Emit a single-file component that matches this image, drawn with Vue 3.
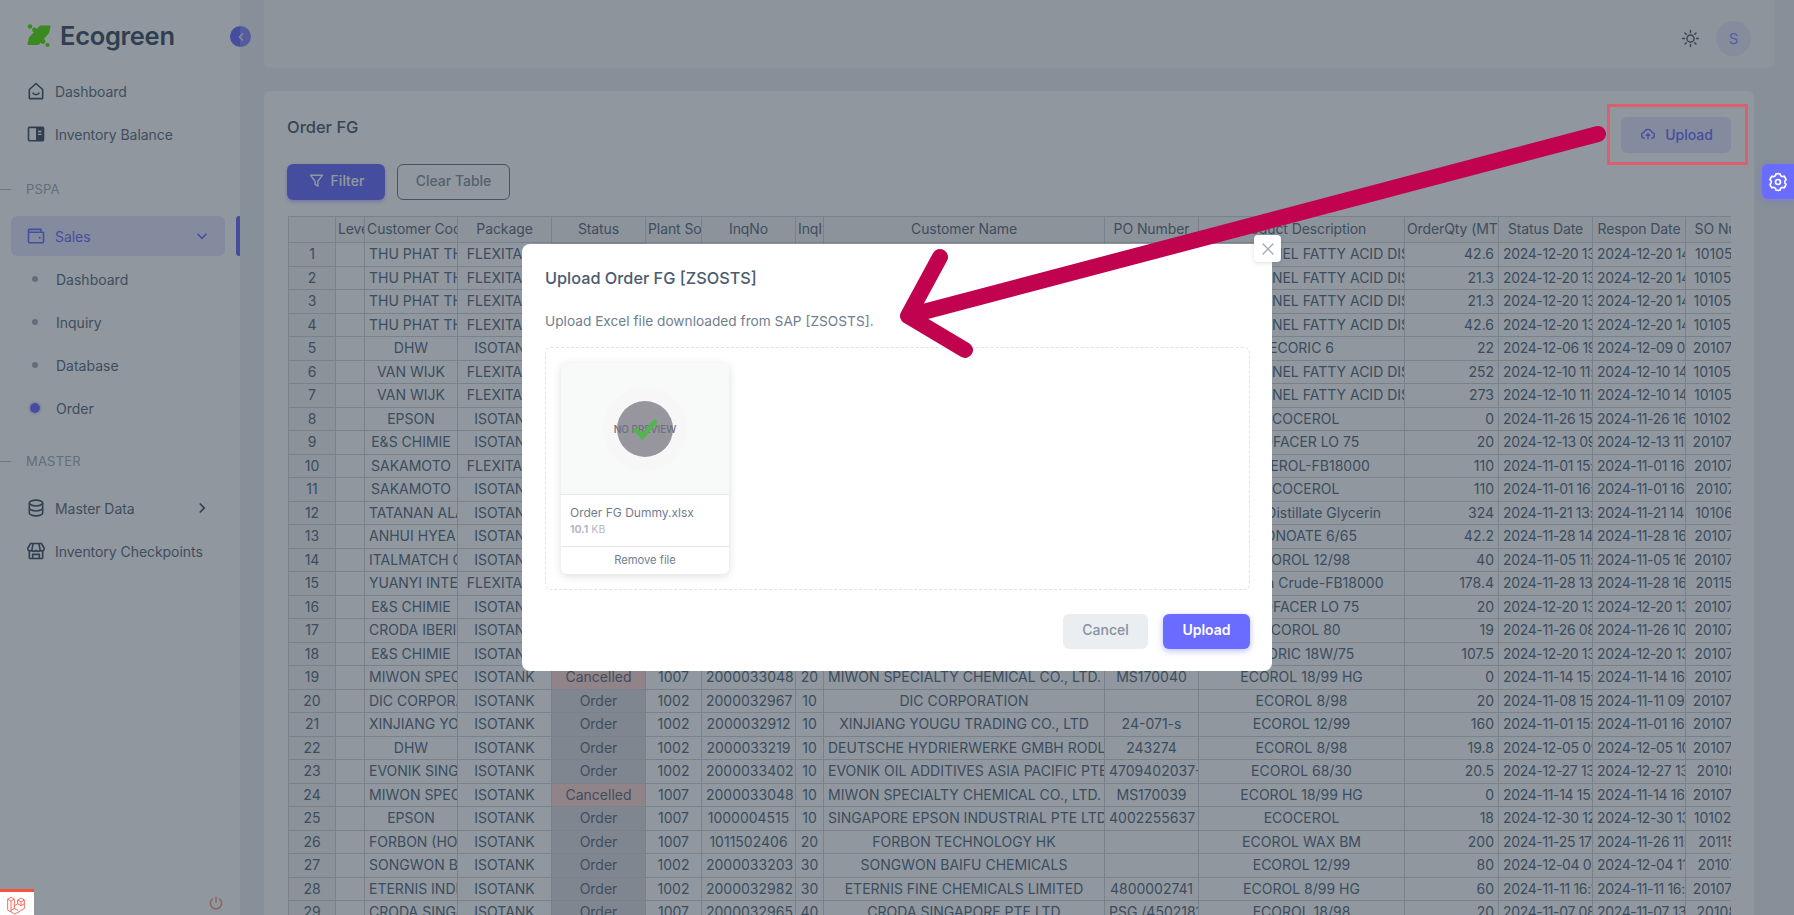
<script setup>
const colWidths = [47, 29, 93, 94, 94, 56, 94, 28, 281, 94, 206, 94, 94, 93, 94]

const headers = ['', 'Level', 'Customer Code', 'Package', 'Status', 'Plant Source', 'InqNo', 'InqItem', 'Customer Name', 'PO Number', 'Product Description', 'OrderQty (MT)', 'Status Date', 'Respon Date', 'SO Number']

const FX = 'FLEXITANK'
const IS = 'ISOTANK'
const PK = 'PALM KERNEL FATTY ACID DISTILLATE'

// customer, package, status, plant, inq, item, name, po, product, qty, status date, respon date, so
const rows = [
  ['THU PHAT THANH', FX, 'Order', '1002', '2000033501', '10', 'THU PHAT THANH', '', PK, '42.6', '2024-12-20 13:10:22', '2024-12-20 14:02:11', '1010512201'],
  ['THU PHAT THANH', FX, 'Order', '1002', '2000033502', '10', 'THU PHAT THANH', '', PK, '21.3', '2024-12-20 13:10:22', '2024-12-20 14:02:11', '1010512202'],
  ['THU PHAT THANH', FX, 'Order', '1002', '2000033503', '10', 'THU PHAT THANH', '', PK, '21.3', '2024-12-20 13:10:22', '2024-12-20 14:02:11', '1010512203'],
  ['THU PHAT THANH', FX, 'Order', '1002', '2000033504', '10', 'THU PHAT THANH', '', PK, '42.6', '2024-12-20 13:10:22', '2024-12-20 14:02:11', '1010512204'],
  ['DHW', IS, 'Order', '1002', '2000033210', '10', 'DEUTSCHE HYDRIERWERKE', '', 'ECORIC 6', '22', '2024-12-06 19:10:22', '2024-12-09 08:02:11', '2010712205'],
  ['VAN WIJK', FX, 'Order', '1002', '2000033301', '10', 'VAN WIJK', '', PK, '252', '2024-12-10 11:10:22', '2024-12-10 14:02:11', '1010512206'],
  ['VAN WIJK', FX, 'Order', '1002', '2000033302', '10', 'VAN WIJK', '', PK, '273', '2024-12-10 11:10:22', '2024-12-10 14:02:11', '1010512207'],
  ['EPSON', IS, 'Order', '1007', '1000004510', '10', 'SINGAPORE EPSON', '', 'ECOCEROL', '0', '2024-11-26 15:10:22', '2024-11-26 16:02:11', '1010212208'],
  ['E&S CHIMIE', IS, 'Order', '1002', '2000033110', '10', 'E&S CHIMIE', '', 'ECOFACER LO 75', '20', '2024-12-13 09:10:22', '2024-12-13 11:02:11', '2010712209'],
  ['SAKAMOTO', FX, 'Order', '1007', '2000032901', '10', 'SAKAMOTO', '', 'GLYCEROL-FB18000', '110', '2024-11-01 15:10:22', '2024-11-01 16:02:11', '2010712210'],
  ['SAKAMOTO', IS, 'Order', '1007', '2000032902', '10', 'SAKAMOTO', '', 'ECOCEROL', '110', '2024-11-01 16:10:22', '2024-11-01 16:32:11', '2010712211'],
  ['TATANAN ALAM', IS, 'Order', '1002', '2000032950', '10', 'TATANAN ALAM', '', 'Crude Distillate Glycerin', '324', '2024-11-21 13:10:22', '2024-11-21 14:02:11', '1010612212'],
  ['ANHUI HYEA', IS, 'Order', '1002', '2000033001', '10', 'ANHUI HYEA', '', 'ECONOATE 6/65', '42.2', '2024-11-28 14:10:22', '2024-11-28 16:02:11', '2010712213'],
  ['ITALMATCH CHEMICALS', IS, 'Order', '1002', '2000032930', '10', 'ITALMATCH', '', 'ECOROL 12/98', '40', '2024-11-05 11:10:22', '2024-11-05 16:02:11', '2010712214'],
  ['YUANYI INTERNATIONAL', FX, 'Order', '1002', '2000033005', '10', 'YUANYI', '', 'Glycerin Crude-FB18000', '178.4', '2024-11-28 13:10:22', '2024-11-28 16:02:11', '2011512215'],
  ['E&S CHIMIE', IS, 'Order', '1002', '2000033112', '10', 'E&S CHIMIE', '', 'ECOFACER LO 75', '20', '2024-12-20 13:10:22', '2024-12-20 13:32:11', '2010712216'],
  ['CRODA IBERICA', IS, 'Order', '1007', '2000032990', '10', 'CRODA IBERICA', '', 'ECOROL 80', '19', '2024-11-26 08:10:22', '2024-11-26 10:02:11', '2010712217'],
  ['E&S CHIMIE', IS, 'Order', '1002', '2000033114', '10', 'E&S CHIMIE', '', 'ECORIC 18W/75', '107.5', '2024-12-20 13:10:22', '2024-12-20 13:32:11', '2010712218'],
  ['MIWON SPECIALTY', IS, 'Cancelled', '1007', '2000033048', '20', 'MIWON SPECIALTY CHEMICAL CO., LTD.', 'MS170040', 'ECOROL 18/99 HG', '0', '2024-11-14 15:10:22', '2024-11-14 16:02:11', '2010712219'],
  ['DIC CORPORATION', IS, 'Order', '1002', '2000032967', '10', 'DIC CORPORATION', '', 'ECOROL 8/98', '20', '2024-11-08 15:10:22', '2024-11-11 09:02:11', '2010712220'],
  ['XINJIANG YOUGU', IS, 'Order', '1002', '2000032912', '10', 'XINJIANG YOUGU TRADING CO., LTD', '24-071-s', 'ECOROL 12/99', '160', '2024-11-01 15:10:22', '2024-11-01 16:02:11', '2010732221'],
  ['DHW', IS, 'Order', '1002', '2000033219', '10', 'DEUTSCHE HYDRIERWERKE GMBH RODLEBEN', '243274', 'ECOROL 8/98', '19.8', '2024-12-05 09:10:22', '2024-12-05 10:02:11', '2010712222'],
  ['EVONIK SINGAPORE', IS, 'Order', '1002', '2000033402', '10', 'EVONIK OIL ADDITIVES ASIA PACIFIC PTE LTD', '4709402037-1', 'ECOROL 68/30', '20.5', '2024-12-27 13:10:22', '2024-12-27 13:32:11', '201081223'],
  ['MIWON SPECIALTY', IS, 'Cancelled', '1007', '2000033048', '10', 'MIWON SPECIALTY CHEMICAL CO., LTD.', 'MS170039', 'ECOROL 18/99 HG', '0', '2024-11-14 15:10:22', '2024-11-14 16:02:11', '2010712224'],
  ['EPSON', IS, 'Order', '1007', '1000004515', '10', 'SINGAPORE EPSON INDUSTRIAL PTE LTD', '4002255637', 'ECOCEROL', '18', '2024-12-30 12:10:22', '2024-12-30 13:02:11', '1010212225'],
  ['FORBON (HONG KONG)', IS, 'Order', '1007', '1011502406', '20', 'FORBON TECHNOLOGY HK', '', 'ECOROL WAX BM', '200', '2024-11-25 17:10:22', '2024-11-26 11:02:11', '201151226'],
  ['SONGWON BAIFU', IS, 'Order', '1002', '2000033203', '30', 'SONGWON BAIFU CHEMICALS', '', 'ECOROL 12/99', '80', '2024-12-04 09:10:22', '2024-12-04 11:02:11', '201071227'],
  ['ETERNIS INDIA', IS, 'Order', '1002', '2000032982', '30', 'ETERNIS FINE CHEMICALS LIMITED', '4800002741', 'ECOROL 8/99 HG', '60', '2024-11-11 16:10:22', '2024-11-11 16:32:11', '2010712228'],
  ['CRODA SINGAPORE', IS, 'Order', '1007', '2000032965', '40', 'CRODA SINGAPORE PTE LTD', 'PSG /4502181', 'ECOROL 18/98', '20', '2024-11-07 08:10:22', '2024-11-07 13:02:11', '201081229'],
]
</script>

<template>
  <div class="page">
    <aside class="sidebar">
      <div class="brand">
        <svg class="brand-logo" viewBox="0 0 24 24">
          <path d="M13 1.500h9.500c.8 0 1.200.5 1 1.300l-1.500 6.200-9 10.500-2 1.500H1.500c-.8 0-1.200-.5-1-1.300L2 13.500z" />
          <circle cx="3" cy="2.500" r="2.300" />
          <circle cx="7.500" cy="6" r="2.400" />
          <circle cx="16" cy="17.500" r="2.400" />
          <circle cx="20.500" cy="21" r="2.100" />
        </svg>
        <span class="brand-name">Ecogreen</span>
      </div>
      <button class="collapse">
        <svg viewBox="0 0 24 24" width="12" height="12"><path d="M15 6l-6 6 6 6" fill="none" stroke="#e6e6ff" stroke-width="3.500" stroke-linecap="round" stroke-linejoin="round" /></svg>
      </button>

      <nav class="menu">
        <a class="item">
          <svg class="ico" viewBox="0 0 24 24"><path d="M4 20.500V10.200L12 3l8 7.200v10.300a.6.600 0 0 1-.6.600H4.600a.6.600 0 0 1-.6-.6z" /><path d="M8 14a4.500 4.500 0 0 0 8 0" /></svg>
          <span>Dashboard</span>
        </a>
        <a class="item">
          <svg class="ico" viewBox="0 0 24 24"><rect x="3" y="4" width="18" height="16" rx="1" /><path class="solid" d="M12 4h9v16h-9z" /><path class="cut" d="M14.500 9h4M14.500 12.500h4" /></svg>
          <span>Inventory Balance</span>
        </a>

        <div class="section"><span>PSPA</span></div>

        <a class="item active">
          <svg class="ico" viewBox="0 0 24 24"><path d="M3 7.500V19a1 1 0 0 0 1 1h16a1 1 0 0 0 1-1V8.500a1 1 0 0 0-1-1H3zM3 7.500V5.200A1.200 1.200 0 0 1 4.200 4H18v3.500" /><circle cx="16.500" cy="14" r="1.200" class="dot" /></svg>
          <span>Sales</span>
          <svg class="chev" viewBox="0 0 24 24"><path d="M6 9l6 6 6-6" /></svg>
        </a>
        <a class="sub"><i></i><span>Dashboard</span></a>
        <a class="sub"><i></i><span>Inquiry</span></a>
        <a class="sub"><i></i><span>Database</span></a>
        <a class="sub on"><i></i><span>Order</span></a>

        <div class="section master"><span>MASTER</span></div>

        <a class="item">
          <svg class="ico" viewBox="0 0 24 24"><ellipse cx="12" cy="6" rx="8" ry="3.500" /><path d="M4 6v12c0 1.900 3.600 3.500 8 3.500s8-1.600 8-3.500V6M4 12c0 1.900 3.600 3.500 8 3.500s8-1.600 8-3.500" /></svg>
          <span>Master Data</span>
          <svg class="chev" viewBox="0 0 24 24"><path d="M9 6l6 6-6 6" /></svg>
        </a>
        <a class="item">
          <svg class="ico" viewBox="0 0 24 24"><path d="M4 11.500V20a1 1 0 0 0 1 1h14a1 1 0 0 0 1-1v-8.500" /><path d="M5.500 3h13L22 9a3 3 0 0 1-5 2.200 3.600 3.600 0 0 1-5 0 3.600 3.600 0 0 1-5 0A3 3 0 0 1 2 9z" /><path d="M8.500 3 7 11M15.500 3 17 11M8 21v-5h8v5" /></svg>
          <span>Inventory Checkpoints</span>
        </a>
      </nav>

      <svg class="power" viewBox="0 0 24 24"><path d="M7 5.500a8.500 8.500 0 1 0 10 0M12 2.500v9" /></svg>
    </aside>

    <main class="content">
      <header class="topbar">
        <svg class="sun" viewBox="0 0 24 24"><circle cx="12" cy="12" r="4.500" /><path d="M12 2v2.500M12 19.500V22M2 12h2.500M19.500 12H22M5 5l1.700 1.700M17.300 17.300 19 19M5 19l1.700-1.700M17.300 6.700 19 5" /></svg>
        <div class="avatar">S</div>
      </header>

      <section class="card">
        <div class="card-head">
          <h2>Order FG</h2>
          <button class="btn-tonal">
            <svg viewBox="0 0 24 24"><path d="M7 18.500a4.500 4.500 0 0 1-1-8.900 6.200 6.200 0 0 1 12 0 4.500 4.500 0 0 1-1 8.900" /><path d="M12 20v-8M8.800 14.800 12 11.600l3.200 3.200" /></svg>
            Upload
          </button>
        </div>
        <div class="toolbar">
          <button class="btn-primary">
            <svg viewBox="0 0 24 24"><path d="M3.500 4.500h17L14 13v7l-4-2.500V13z" /></svg>
            Filter
          </button>
          <button class="btn-outline">Clear Table</button>
        </div>

        <div class="grid">
          <table>
            <colgroup>
              <col v-for="(w, i) in colWidths" :key="i" :style="{ width: w + 'px' }" />
            </colgroup>
            <thead>
              <tr>
                <th v-for="h in headers" :key="h">{{ h }}</th>
              </tr>
            </thead>
            <tbody>
              <tr v-for="(r, i) in rows" :key="i">
                <th class="num">{{ i + 1 }}</th>
                <td></td>
                <td>{{ r[0] }}</td>
                <td>{{ r[1] }}</td>
                <td :class="r[2] === 'Cancelled' ? 'st-cancel' : 'st-order'">{{ r[2] }}</td>
                <td>{{ r[3] }}</td>
                <td>{{ r[4] }}</td>
                <td>{{ r[5] }}</td>
                <td>{{ r[6] }}</td>
                <td>{{ r[7] }}</td>
                <td>{{ r[8] }}</td>
                <td class="right">{{ r[9] }}</td>
                <td class="date">{{ r[10] }}</td>
                <td class="date">{{ r[11] }}</td>
                <td>{{ r[12] }}</td>
              </tr>
            </tbody>
          </table>
        </div>
      </section>
    </main>

    <div class="backdrop"></div>

    <div class="modal">
      <button class="modal-close">
        <svg viewBox="0 0 24 24" width="20" height="20"><path d="M5.500 5.500l13 13M18.500 5.500l-13 13" fill="none" stroke="#a8afb7" stroke-width="1.800" /></svg>
      </button>
      <h3>Upload Order FG [ZSOSTS]</h3>
      <p>Upload Excel file downloaded from SAP [ZSOSTS].</p>
      <div class="dropzone">
        <div class="preview">
          <div class="thumb">
            <div class="halo">
              <div class="circle"></div>
              <span class="no-prev">NO PREVIEW</span>
              <svg class="check" viewBox="0 0 24 24"><path d="M3.500 13l6 6L21 5.500" /></svg>
            </div>
          </div>
          <div class="details">
            <div class="fname">Order FG Dummy.xlsx</div>
            <div class="fsize"><b>10.1</b> KB</div>
          </div>
          <div class="remove">Remove file</div>
        </div>
      </div>
      <div class="modal-foot">
        <button class="btn-cancel">Cancel</button>
        <button class="btn-upload">Upload</button>
      </div>
    </div>

    <button class="gear">
      <svg viewBox="0 0 24 24"><path d="M3.340 17a10 10 0 0 1-.98-2.330 3 3 0 0 0 0-5.340 10 10 0 0 1 2.500-4.340 3 3 0 0 0 4.640-2.670 10 10 0 0 1 5 0 3 3 0 0 0 4.640 2.670c.58.590 1.090 1.260 1.520 2.010s.76 1.530.98 2.330a3 3 0 0 0 0 5.340 10 10 0 0 1-2.500 4.340 3 3 0 0 0-4.640 2.670 10 10 0 0 1-5 0 3 3 0 0 0-4.640-2.670A10 10 0 0 1 3.340 17z" /><circle cx="12" cy="12" r="3" /></svg>
    </button>

    <div class="debugbar">
      <svg viewBox="0 0 24 24"><path d="M2 5l4-2.300L10 5 6 7.300zM2 5v13l8.500 4.900 11-6.300M6 7.300v13M10 5v11l-4 2.300M10 16l4.500 2.700M22 6l-4-2.300L14 6l4 2.300zM14 6v4.500l4 2.300 4-2.300V6M18 8.300v4.500M22 10.500v6.100M14 10.500 10 13" /></svg>
    </div>

    <div class="mark-box"></div>
    <svg class="arrow" viewBox="0 0 1794 915">
      <path d="M1598 134 908 316M940 257 908 316 965 350" />
    </svg>
  </div>
</template>

<style>
html,
body {
  margin: 0;
  overflow: hidden;
}
</style>

<style scoped>
.page {
  position: relative;
  display: flex;
  width: 1794px;
  height: 915px;
  overflow: hidden;
  background: #eceef4;
  font-family: Inter, "Liberation Sans", sans-serif;
  font-size: 14px;
  color: #566a7f;
}

.sidebar {
  position: relative;
  flex: 0 0 240px;
  background: #fff;
}

.brand {
  display: flex;
  align-items: center;
  gap: 9px;
  height: 70px;
  padding: 0 0 0 27px;
}

.brand-logo {
  width: 24px;
  height: 24px;
  margin-top: 1px;
  fill: #52e400;
}

.brand-name {
  font-size: 25.500px;
  font-weight: 600;
  color: #3c4e62;
  letter-spacing: -0.3px;
}

.collapse {
  position: absolute;
  top: 26px;
  left: 230px;
  width: 21px;
  height: 21px;
  padding: 0;
  display: flex;
  align-items: center;
  justify-content: center;
  border: none;
  border-radius: 50%;
  background: linear-gradient(90deg, #696cff 50%, #8689ff 50%);
  box-shadow: 0 0 0 6px rgba(255, 255, 255, 0.1);
}

.menu {
  display: flex;
  flex-direction: column;
  margin-top: 1px;
}

.item {
  display: flex;
  align-items: center;
  height: 40px;
  margin: 0 15px 3px 11px;
  padding-left: 15px;
  border-radius: 6px;
  position: relative;
  font-size: 14px;
  letter-spacing: -0.05px;
  color: #5d6c7c;
}

.ico {
  flex: 0 0 20px;
  width: 20px;
  height: 20px;
  margin-right: 9px;
  fill: none;
  stroke: #3c4e62;
  stroke-width: 1.900;
  stroke-linejoin: round;
}

.ico .solid {
  fill: #3c4e62;
  stroke: none;
}

.ico .cut {
  stroke: #fff;
  stroke-width: 1.600;
}

.item.active {
  background: rgba(105, 108, 255, 0.16);
  color: #696cff;
}

.item.active::after {
  content: "";
  position: absolute;
  top: 0;
  right: -15px;
  width: 4px;
  height: 40px;
  border-radius: 3px 0 0 3px;
  background: #696cff;
}

.item.active .ico {
  stroke: #696cff;
}

.item.active .dot {
  fill: #696cff;
  stroke: none;
}

.chev {
  position: absolute;
  right: 14px;
  top: 11px;
  width: 18px;
  height: 18px;
  fill: none;
  stroke: #3c4e62;
  stroke-width: 2.200;
}

.item.active .chev {
  stroke: #696cff;
}

.section {
  position: relative;
  height: 20px;
  margin: 22px 0 17px 26px;
  font-size: 13px;
  line-height: 20px;
  color: #a1acb8;
  letter-spacing: 0.2px;
}

.section::before {
  content: "";
  position: absolute;
  left: -26px;
  top: 10px;
  width: 11px;
  height: 1px;
  background: #b9c0c8;
}

.section.master {
  margin-top: 20px;
  margin-bottom: 17px;
}

.sub {
  display: flex;
  align-items: center;
  height: 40px;
  margin-bottom: 3px;
  padding-left: 32px;
  color: #5d6c7c;
}

.sub i {
  width: 6px;
  height: 6px;
  margin-right: 18px;
  border-radius: 50%;
  background: #a1acb8;
}

.sub.on i {
  width: 10px;
  height: 10px;
  margin: 0 16px 0 -2px;
  background: #696cff;
  box-shadow: 0 0 0 2px rgba(105, 108, 255, 0.16);
}

.power {
  position: absolute;
  left: 208px;
  bottom: 4px;
  width: 16px;
  height: 16px;
  fill: none;
  stroke: #ff3e1d;
  opacity: 0.6;
  stroke-width: 2.200;
}

.content {
  flex: 1;
  min-width: 0;
  padding: 0 40px 0 24px;
}

.topbar {
  display: flex;
  align-items: center;
  justify-content: flex-end;
  gap: 16px;
  width: 1510px;
  height: 68px;
  padding: 9px 23px 0 0;
  box-sizing: border-box;
  border-radius: 0 0 6px 6px;
  background: rgba(255, 255, 255, 0.6);
}

.sun {
  width: 19px;
  height: 19px;
  fill: none;
  stroke: #4d5b6a;
  stroke-width: 1.800;
  stroke-linecap: round;
}

.avatar {
  display: flex;
  align-items: center;
  justify-content: center;
  width: 35px;
  height: 35px;
  border-radius: 50%;
  background: rgba(105, 108, 255, 0.1);
  color: #8a8cff;
  font-size: 15px;
}

.card {
  margin-top: 23px;
  height: 900px;
  padding: 26px 23px 0 23px;
  background: #fff;
  border-radius: 6px;
}

.card-head {
  display: flex;
  justify-content: space-between;
  align-items: flex-start;
  height: 36px;
}

.card-head h2 {
  margin: 0;
  font-size: 16.500px;
  font-weight: 500;
  line-height: 20px;
  color: #4a5c6f;
}

.btn-tonal {
  display: flex;
  align-items: center;
  justify-content: center;
  gap: 9px;
  width: 110px;
  height: 36px;
  padding: 0 0 2px 1px;
  border: none;
  border-radius: 6px;
  background: rgba(105, 108, 255, 0.16);
  color: #696cff;
  font: 500 14px Inter, sans-serif;
}

.btn-tonal svg {
  width: 16px;
  height: 16px;
  fill: none;
  stroke: #696cff;
  stroke-width: 2;
}

.toolbar {
  display: flex;
  gap: 12px;
  margin-top: 11px;
}

.btn-primary {
  display: flex;
  align-items: center;
  justify-content: center;
  gap: 6px;
  width: 98px;
  height: 36px;
  padding: 0 0 3px;
  border: none;
  border-radius: 6px;
  background: #696cff;
  color: #fff;
  font: 500 14px Inter, sans-serif;
  box-shadow: 0 2px 4px rgba(105, 108, 255, 0.4);
}

.btn-primary svg {
  width: 17px;
  height: 17px;
  fill: none;
  stroke: #fff;
  stroke-width: 2;
  stroke-linejoin: round;
}

.btn-outline {
  width: 113px;
  height: 36px;
  padding: 0 0 3px;
  border: 1px solid #6b7885;
  border-radius: 6px;
  background: transparent;
  color: #8592a3;
  font: 500 14px Inter, sans-serif;
}

.grid {
  width: 1443px;
  margin: 16px 0 0 1px;
  overflow: hidden;
}

table {
  width: 1491px;
  table-layout: fixed;
  border-collapse: collapse;
  font-size: 14px;
  color: #566a7f;
}

th,
td {
  box-sizing: border-box;
  height: 23.5px;
  padding: 0 4px;
  border: 1px solid #ced4da;
  overflow: hidden;
  white-space: nowrap;
  text-align: center;
  font-weight: 400;
  line-height: 20px;
}

thead th {
  height: 26px;
  padding: 0 2px 2px;
  background: #f7f7f8;
  color: #5d6c7c;
  letter-spacing: -0.1px;
}

th.num {
  background: #f4f4f6;
}

td.right {
  text-align: right;
}

td.date {
  letter-spacing: -0.35px;
}

.st-order {
  background: #dcdce2;
  color: #5d6c7c;
}

.st-cancel {
  background: #ffd8d4;
  color: #5d6c7c;
}

.backdrop {
  position: absolute;
  inset: 0;
  background: rgba(34, 48, 62, 0.5);
}

.modal {
  position: absolute;
  top: 244px;
  left: 522px;
  box-sizing: border-box;
  width: 750px;
  height: 427px;
  padding: 24px 22px 0 23px;
  border-radius: 8px;
  background: #fff;
}

.modal-close {
  position: absolute;
  top: -9px;
  right: -9px;
  display: flex;
  align-items: center;
  justify-content: center;
  width: 27px;
  height: 27px;
  padding: 0;
  border: none;
  border-radius: 4px;
  background: #fff;
  box-shadow: 0 1px 4px rgba(34, 48, 62, 0.16);
}

.modal h3 {
  margin: 0;
  font-size: 16.300px;
  font-weight: 500;
  line-height: 20px;
  color: #4a5c6f;
}

.modal p {
  margin: 23px 0 0;
  font-size: 13.700px;
  line-height: 20px;
  color: #6f7e8e;
}

.dropzone {
  box-sizing: border-box;
  height: 243px;
  margin-top: 16px;
  padding: 15px 15px;
  border: 1px dashed #dfe3e7;
  border-radius: 6px;
}

.preview {
  width: 168px;
  border-radius: 6px;
  background: #fff;
  box-shadow: 0 2px 8px rgba(34, 48, 62, 0.16);
  overflow: hidden;
}

.thumb {
  display: flex;
  align-items: center;
  justify-content: center;
  height: 131px;
  background: #f8f9f9;
  border-bottom: 1px solid #e4e6e8;
}

.halo {
  position: relative;
  display: flex;
  align-items: center;
  justify-content: center;
  width: 84px;
  height: 84px;
  border-radius: 50%;
  background: #f7f7f8;
}

.circle {
  width: 56px;
  height: 56px;
  border-radius: 50%;
  background: #97969f;
}

.no-prev {
  position: absolute;
  left: 0;
  right: 0;
  text-align: center;
  font-size: 10px;
  font-weight: 500;
  white-space: nowrap;
  color: #70707a;
}

.check {
  position: absolute;
  width: 26px;
  height: 26px;
  fill: none;
  stroke: #51b550;
  stroke-width: 4.500;
  stroke-linecap: round;
}

.details {
  height: 52px;
  padding: 9px 9px 0;
  box-sizing: border-box;
  border-bottom: 1px solid #e4e6e8;
}

.fname {
  font-size: 12px;
  line-height: 17px;
  color: #6f7e8e;
}

.fsize {
  font-size: 10.500px;
  line-height: 18px;
  color: #b3b9c1;
}

.remove {
  height: 27px;
  line-height: 26px;
  text-align: center;
  font-size: 11.200px;
  color: #6f7e8e;
}

.modal-foot {
  display: flex;
  justify-content: flex-end;
  gap: 15px;
  margin-top: 24px;
}

.btn-cancel {
  width: 85px;
  height: 35px;
  padding: 0 0 4px;
  border: none;
  border-radius: 6px;
  background: #ebeef0;
  color: #8592a3;
  font: 500 14px Inter, sans-serif;
}

.btn-upload {
  width: 87px;
  height: 35px;
  padding: 0 0 4px;
  border: none;
  border-radius: 6px;
  background: #696cff;
  color: #fff;
  font: 600 14px Inter, sans-serif;
  box-shadow: 0 2px 6px rgba(105, 108, 255, 0.45);
}

.gear {
  position: absolute;
  top: 164px;
  right: 0;
  display: flex;
  align-items: center;
  justify-content: center;
  width: 32px;
  height: 35px;
  padding: 0;
  border: none;
  border-radius: 6px 0 0 6px;
  background: #696cff;
  box-shadow: 0 2px 6px rgba(105, 108, 255, 0.4);
}

.gear svg {
  width: 20px;
  height: 20px;
  fill: none;
  stroke: #fff;
  stroke-width: 2;
}

.debugbar {
  position: absolute;
  left: 0;
  bottom: 0;
  width: 34px;
  height: 26px;
  box-sizing: border-box;
  padding: 3px 0 0 6px;
  border-top: 3px solid #f4523d;
  background: #fff;
  overflow: hidden;
}

.debugbar svg {
  display: block;
  width: 20px;
  height: 20px;
  fill: none;
  stroke: #f4523d;
  stroke-width: 1;
}

.mark-box {
  position: absolute;
  top: 104px;
  left: 1607px;
  box-sizing: border-box;
  width: 141px;
  height: 61px;
  border: 3px solid #dc5f70;
}

.arrow {
  position: absolute;
  inset: 0;
  width: 1794px;
  height: 915px;
  pointer-events: none;
  fill: none;
  stroke: #c1024f;
  stroke-width: 16;
  stroke-linecap: round;
  stroke-linejoin: round;
}
</style>
